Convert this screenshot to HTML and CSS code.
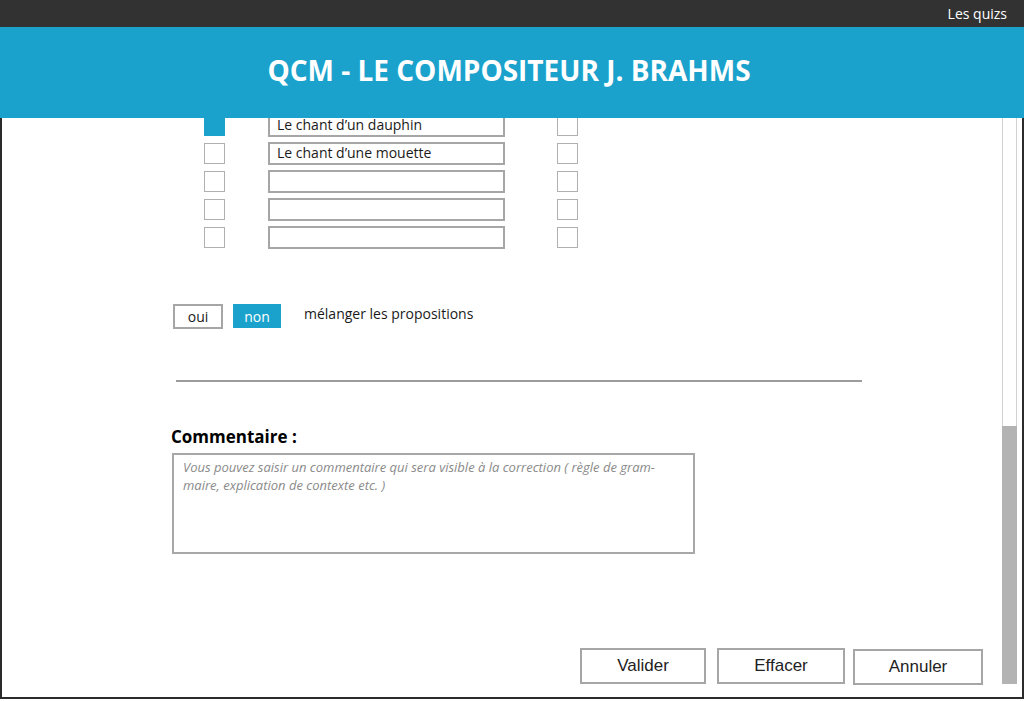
FILE: index.html
```html
<!DOCTYPE html>
<html lang="fr">
<head>
<meta charset="utf-8">
<title>QCM - Le compositeur J. Brahms</title>
<link rel="stylesheet" href="styles.css">
</head>
<body>
<div class="topbar">Les quizs</div>
<header class="header"><h1 class="title">QCM - LE COMPOSITEUR J. BRAHMS</h1></header>
<div class="frame">
  <main class="content">
    <div class="rows">
      <div class="row"><span class="box box-on"></span><span class="field">Le chant d’un dauphin</span><span class="box"></span></div>
      <div class="row"><span class="box"></span><span class="field">Le chant d’une mouette</span><span class="box"></span></div>
      <div class="row"><span class="box"></span><span class="field"></span><span class="box"></span></div>
      <div class="row"><span class="box"></span><span class="field"></span><span class="box"></span></div>
      <div class="row"><span class="box"></span><span class="field"></span><span class="box"></span></div>
    </div>
    <div class="toggle-row">
      <span class="tg tg-off">oui</span>
      <span class="tg tg-on">non</span>
      <span class="tg-label">mélanger les propositions</span>
    </div>
    <div class="sep"></div>
    <h2 class="comment-title">Commentaire :</h2>
    <div class="comment-box"><span class="placeholder">Vous pouvez saisir un commentaire qui sera visible à la correction ( règle de gram-<br>maire, explication de contexte etc. )</span></div>
    <div class="actions">
      <span class="btn btn-valider">Valider</span>
      <span class="btn btn-effacer">Effacer</span>
      <span class="btn btn-annuler">Annuler</span>
    </div>
  </main>
  <div class="scrollbar"><div class="thumb"></div></div>
</div>
</body>
</html>
```

FILE: styles.css
```css
* { box-sizing: border-box; }
html, body { margin: 0; padding: 0; }
body {
  width: 1024px;
  height: 701px;
  overflow: hidden;
  background: #fff;
  font-family: "Open Sans", "Noto Sans", sans-serif;
  color: #1a1a1a;
}
.topbar {
  height: 27px;
  background: #323232;
  color: #fff;
  font-size: 14px;
  line-height: 27px;
  text-align: right;
  padding-right: 17px;
}
.header {
  height: 91px;
  background: #1ba2cc;
  display: flex;
  align-items: center;
  justify-content: center;
}
.title {
  margin: 0 6px 0 0;
  color: #fff;
  font-size: 28px;
  font-weight: 700;
  letter-spacing: 0;
  line-height: 36px;
  padding-bottom: 5px;
}
.frame {
  height: 581px;
  display: flex;
  border-left: 2px solid #2b2b2b;
  border-right: 2px solid #2b2b2b;
  border-bottom: 2px solid #2b2b2b;
}
.content {
  flex: 1;
  overflow: hidden;
  padding-left: 170px;
  display: flex;
  flex-direction: column;
}
.rows {
  margin-top: -4px;
  margin-left: 32px;
  display: flex;
  flex-direction: column;
  gap: 5px;
}
.row {
  height: 23px;
  display: flex;
  align-items: flex-start;
}
.box {
  width: 21px;
  height: 21px;
  margin-top: 1px;
  border: 1.5px solid #b0b0b0;
  background: #fff;
}
.box-on {
  background: #1ba2cc;
  border-color: #1ba2cc;
}
.field {
  width: 237px;
  height: 23px;
  margin-left: 43px;
  margin-right: 52px;
  border: 2px solid #a6a6a6;
  padding-left: 7px;
  font-size: 14px;
  line-height: 18px;
  color: #1a1a1a;
}
.toggle-row {
  margin-top: 55px;
  margin-left: 1px;
  display: flex;
  align-items: flex-start;
  height: 25px;
}
.tg {
  height: 25px;
  font-size: 14px;
  display: flex;
  align-items: center;
  justify-content: center;
}
.tg-off {
  width: 50px;
  border: 2px solid #a6a6a6;
  color: #1a1a1a;
}
.tg-on {
  width: 48px;
  height: 24px;
  margin-left: 10px;
  background: #1ba2cc;
  color: #fff;
}
.tg-label {
  margin-left: 23px;
  font-size: 14px;
  line-height: 18px;
  margin-top: 1px;
  color: #1a1a1a;
}
.sep {
  margin-top: 51px;
  margin-left: 4px;
  width: 686px;
  height: 2px;
  background: #9c9c9c;
}
.comment-title {
  margin: 44px 0 0 -1px;
  font-size: 17px;
  font-weight: 700;
  line-height: 22px;
  color: #000;
}
.comment-box {
  margin-top: 5px;
  width: 523px;
  height: 101px;
  border: 2px solid #a8a8a8;
  padding: 3px 9px;
  line-height: 17px;
}
.placeholder {
  font-size: 13px;
  font-style: italic;
  line-height: 17px;
  color: #8a8a8a;
}
.actions {
  margin-top: auto;
  margin-bottom: 12px;
  display: flex;
  justify-content: flex-end;
  align-items: flex-start;
  padding-right: 19px;
}
.btn {
  height: 36px;
  border: 2px solid #a6a6a6;
  display: flex;
  align-items: center;
  justify-content: center;
  font-family: "Liberation Sans", Arial, sans-serif;
  font-size: 17px;
  color: #222;
}
.btn-valider { width: 126px; }
.btn-effacer { width: 128px; margin-left: 11px; }
.btn-annuler { width: 130px; margin-left: 8px; margin-top: 1px; }
.scrollbar {
  width: 15px;
  height: 566px;
  margin-right: 5px;
  border-left: 1px solid #d2d2d2;
  border-right: 1px solid #d2d2d2;
  display: flex;
  flex-direction: column;
  justify-content: flex-end;
}
.thumb {
  height: 258px;
  margin: 0 -1px;
  background: #b3b3b3;
}
```
